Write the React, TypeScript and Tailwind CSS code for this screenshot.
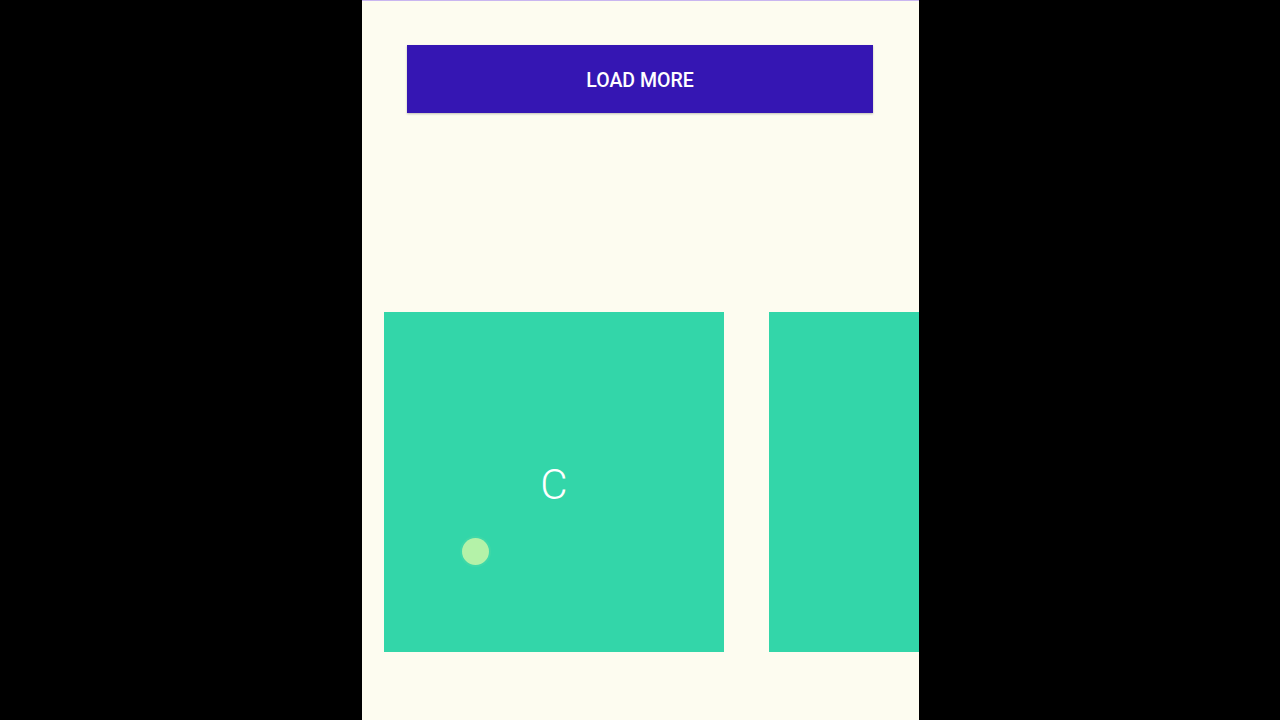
export default function App() {
  return (
    <div className="w-[1280px] h-[720px] bg-black flex justify-center overflow-hidden" style={{ fontFamily: 'Roboto, "Noto Sans", sans-serif' }}>
      <div className="ml-[1px] w-[557px] h-full bg-[#fdfcf0] border-t border-[#c9b6f0] flex flex-col relative overflow-hidden">
        <div className="pt-[44px] px-[45px]">
          <button className="w-[466px] h-[68px] pt-[3px] bg-[#3516b3] text-white text-[19.5px] font-medium shadow-[0_1px_2px_rgba(0,0,0,0.25)] flex items-center justify-center">
            LOAD MORE
          </button>
        </div>
        <div className="mt-[199px] pl-[22px] flex gap-[45px]">
          <div className="w-[340px] h-[340px] pt-[6px] shrink-0 bg-[#33d6a9] flex items-center justify-center">
            <span className="text-white text-[42px] font-light leading-none">C</span>
          </div>
          <div className="w-[340px] h-[340px] shrink-0 bg-[#33d6a9]" />
        </div>
        <div className="absolute left-[98px] top-[535px] w-[31px] h-[31px] rounded-full bg-[#3fd8a8] flex items-center justify-center">
          <div className="w-[27px] h-[27px] rounded-full bg-[#b4f2a8]" />
        </div>
      </div>
    </div>
  );
}
